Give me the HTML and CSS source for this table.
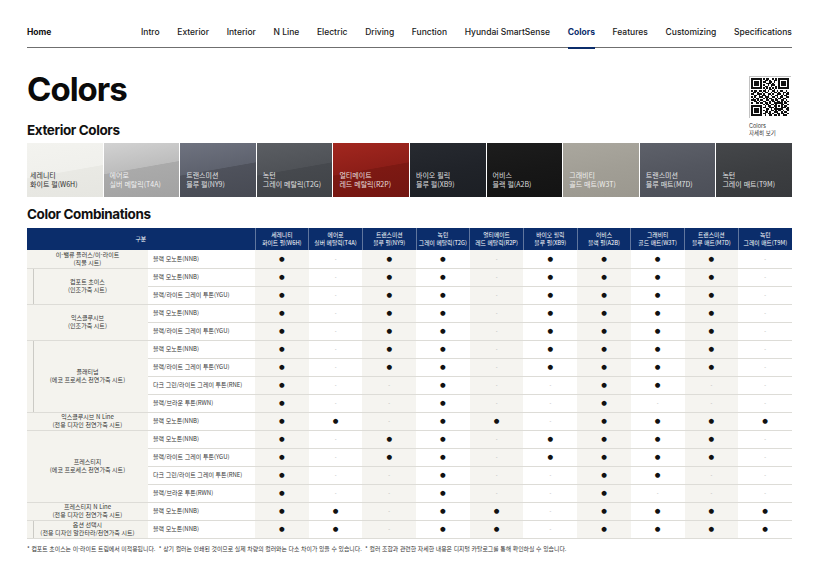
FILE: index.html
```html
<!DOCTYPE html>
<html lang="ko">
<head>
<meta charset="utf-8">
<title>Colors</title>
<link rel="stylesheet" href="styles.css">
</head>
<body>
<div class="page">
  <nav class="gnb">
    <span class="home">Home</span>
    <ul class="menu">
      <li>Intro</li><li>Exterior</li><li>Interior</li><li>N Line</li><li>Electric</li><li>Driving</li><li>Function</li><li>Hyundai SmartSense</li><li class="on">Colors</li><li>Features</li><li>Customizing</li><li>Specifications</li>
    </ul>
  </nav>

  <div class="head">
    <div class="titles">
      <h1 class="title">Colors</h1>
      <h2 class="sub">Exterior Colors</h2>
    </div>
    <div class="qr">
      <svg viewBox="-1.5 -1.5 28 28" shape-rendering="crispEdges">
        <rect x="-1.5" y="-1.5" width="28" height="28" fill="#fff" stroke="#9a9a9a" stroke-width="0.4"/>
        <path fill="#111" fill-rule="evenodd" d="M0 0h7v7H0zM1 1h5v5H1zM2 2h3v3H2zM18 0h7v7h-7zM19 1h5v5h-5zM20 2h3v3h-3zM0 18h7v7H0zM1 19h5v5H1zM2 20h3v3H2zM16 16h5v5h-5zM17 17h3v3h-3zM18 18h1v1h-1z"/>
        <path fill="none" stroke="#111" stroke-width="1" d="M8 .5h1M10 .5h2M14 .5h1M16 .5h1M9 1.5h2M12 1.5h1M15 1.5h2M8 2.5h2M12 2.5h2M15 2.5h1M10 3.5h3M14 3.5h1M8 4.5h1M11 4.5h1M13 4.5h3M9 5.5h2M13 5.5h1M16 5.5h1M8 6.5h1M10 6.5h1M12 6.5h1M14 6.5h1M16 6.5h1M9 7.5h1M12 7.5h2M15 7.5h1M0 8.5h1M2 8.5h2M5 8.5h2M8 8.5h2M11 8.5h1M14 8.5h2M17 8.5h1M19 8.5h2M23 8.5h1M1 9.5h2M4 9.5h1M7 9.5h1M9 9.5h2M13 9.5h1M15 9.5h2M18 9.5h1M21 9.5h2M24 9.5h1M0 10.5h2M4 10.5h3M8 10.5h1M11 10.5h2M14 10.5h1M17 10.5h3M21 10.5h1M23 10.5h2M2 11.5h2M5 11.5h1M7 11.5h3M11 11.5h1M13 11.5h1M16 11.5h2M20 11.5h1M22 11.5h2M0 12.5h1M2 12.5h1M5 12.5h3M9 12.5h3M14 12.5h2M17 12.5h1M19 12.5h2M23 12.5h2M1 13.5h1M3 13.5h2M8 13.5h1M10 13.5h1M12 13.5h2M16 13.5h1M18 13.5h2M21 13.5h2M0 14.5h3M4 14.5h1M6 14.5h2M10 14.5h2M13 14.5h2M16 14.5h2M20 14.5h2M23 14.5h1M2 15.5h2M5 15.5h1M8 15.5h2M12 15.5h1M14 15.5h2M17 15.5h2M20 15.5h1M22 15.5h1M24 15.5h1M0 16.5h1M3 16.5h2M6 16.5h2M9 16.5h2M12 16.5h1M15 16.5h1M22 16.5h2M8 17.5h1M10 17.5h2M13 17.5h2M21 17.5h1M24 17.5h1M9 18.5h1M11 18.5h2M15 18.5h1M22 18.5h2M8 19.5h2M12 19.5h3M21 19.5h2M24 19.5h1M10 20.5h2M13 20.5h1M15 20.5h1M23 20.5h2M8 21.5h1M10 21.5h1M13 21.5h2M16 21.5h1M18 21.5h2M21 21.5h1M24 21.5h1M9 22.5h2M12 22.5h1M15 22.5h3M20 22.5h1M22 22.5h2M8 23.5h2M11 23.5h2M14 23.5h1M17 23.5h2M20 23.5h2M24 23.5h1M9 24.5h1M12 24.5h2M15 24.5h2M18 24.5h1M21 24.5h3"/>
      </svg>
      <p>Colors<br>자세히 보기</p>
    </div>
  </div>

  <div class="swatches">
    <div class="sw sw1"><span>세레니티</span><span>화이트 펄(W6H)</span></div>
    <div class="sw sw2"><span>에어로</span><span>실버 메탈릭(T4A)</span></div>
    <div class="sw sw3"><span>트랜스미션</span><span>블루 펄(NY9)</span></div>
    <div class="sw sw4"><span>녹턴</span><span>그레이 메탈릭(T2G)</span></div>
    <div class="sw sw5"><span>얼티메이트</span><span>레드 메탈릭(R2P)</span></div>
    <div class="sw sw6"><span>바이오 필릭</span><span>블루 펄(XB9)</span></div>
    <div class="sw sw7"><span>어비스</span><span>블랙 펄(A2B)</span></div>
    <div class="sw sw8"><span>그래비티</span><span>골드 매트(W3T)</span></div>
    <div class="sw sw9"><span>트랜스미션</span><span>블루 매트(M7D)</span></div>
    <div class="sw sw10"><span>녹턴</span><span>그레이 매트(T9M)</span></div>
  </div>

  <h2 class="sub sub2">Color Combinations</h2>

  <table class="combo">
    <colgroup>
      <col class="g"><col class="t">
      <col class="alt"><col><col class="alt"><col><col class="alt"><col><col class="alt"><col><col class="alt"><col>
    </colgroup>
    <thead>
      <tr>
        <th colspan="2" class="gubun">구분</th>
        <th>세레니티<br>화이트 펄(W6H)</th>
        <th>에어로<br>실버 메탈릭(T4A)</th>
        <th>트랜스미션<br>블루 펄(NY9)</th>
        <th>녹턴<br>그레이 메탈릭(T2G)</th>
        <th>얼티메이트<br>레드 메탈릭(R2P)</th>
        <th>바이오 필릭<br>블루 펄(XB9)</th>
        <th>어비스<br>블랙 펄(A2B)</th>
        <th>그래비티<br>골드 매트(W3T)</th>
        <th>트랜스미션<br>블루 매트(M7D)</th>
        <th>녹턴<br>그레이 매트(T9M)</th>
      </tr>
    </thead>
    <tbody>
      <tr>
        <td class="grp">이-밸류 플러스/이-라이트<br>(직물 시트)</td><td class="trim">블랙 모노톤(NNB)</td>
        <td>●</td><td class="n">-</td><td>●</td><td>●</td><td class="n">-</td><td>●</td><td>●</td><td>●</td><td>●</td><td class="n">-</td>
      </tr>
      <tr>
        <td class="grp nest" rowspan="2">컴포트 초이스<br>(인조가죽 시트)</td><td class="trim">블랙 모노톤(NNB)</td>
        <td>●</td><td class="n">-</td><td>●</td><td>●</td><td class="n">-</td><td>●</td><td>●</td><td>●</td><td>●</td><td class="n">-</td>
      </tr>
      <tr>
        <td class="trim">블랙/라이트 그레이 투톤(YGU)</td>
        <td>●</td><td class="n">-</td><td>●</td><td>●</td><td class="n">-</td><td>●</td><td>●</td><td>●</td><td>●</td><td class="n">-</td>
      </tr>
      <tr>
        <td class="grp" rowspan="2">익스클루시브<br>(인조가죽 시트)</td><td class="trim">블랙 모노톤(NNB)</td>
        <td>●</td><td class="n">-</td><td>●</td><td>●</td><td class="n">-</td><td>●</td><td>●</td><td>●</td><td>●</td><td class="n">-</td>
      </tr>
      <tr>
        <td class="trim">블랙/라이트 그레이 투톤(YGU)</td>
        <td>●</td><td class="n">-</td><td>●</td><td>●</td><td class="n">-</td><td>●</td><td>●</td><td>●</td><td>●</td><td class="n">-</td>
      </tr>
      <tr>
        <td class="grp nest" rowspan="4">플래티넘<br>(에코 프로세스 천연가죽 시트)</td><td class="trim">블랙 모노톤(NNB)</td>
        <td>●</td><td class="n">-</td><td>●</td><td>●</td><td class="n">-</td><td>●</td><td>●</td><td>●</td><td>●</td><td class="n">-</td>
      </tr>
      <tr>
        <td class="trim">블랙/라이트 그레이 투톤(YGU)</td>
        <td>●</td><td class="n">-</td><td>●</td><td>●</td><td class="n">-</td><td>●</td><td>●</td><td>●</td><td>●</td><td class="n">-</td>
      </tr>
      <tr>
        <td class="trim">다크 그린/라이트 그레이 투톤(RNE)</td>
        <td>●</td><td class="n">-</td><td class="n">-</td><td>●</td><td class="n">-</td><td class="n">-</td><td>●</td><td>●</td><td class="n">-</td><td class="n">-</td>
      </tr>
      <tr>
        <td class="trim">블랙/브라운 투톤(RWN)</td>
        <td>●</td><td class="n">-</td><td class="n">-</td><td>●</td><td class="n">-</td><td class="n">-</td><td>●</td><td class="n">-</td><td class="n">-</td><td class="n">-</td>
      </tr>
      <tr>
        <td class="grp">익스클루시브 N Line<br>(전용 디자인 천연가죽 시트)</td><td class="trim">블랙 모노톤(NNB)</td>
        <td>●</td><td>●</td><td class="n">-</td><td>●</td><td>●</td><td class="n">-</td><td>●</td><td>●</td><td>●</td><td>●</td>
      </tr>
      <tr>
        <td class="grp" rowspan="4">프레스티지<br>(에코 프로세스 천연가죽 시트)</td><td class="trim">블랙 모노톤(NNB)</td>
        <td>●</td><td class="n">-</td><td>●</td><td>●</td><td class="n">-</td><td>●</td><td>●</td><td>●</td><td>●</td><td class="n">-</td>
      </tr>
      <tr>
        <td class="trim">블랙/라이트 그레이 투톤(YGU)</td>
        <td>●</td><td class="n">-</td><td>●</td><td>●</td><td class="n">-</td><td>●</td><td>●</td><td>●</td><td>●</td><td class="n">-</td>
      </tr>
      <tr>
        <td class="trim">다크 그린/라이트 그레이 투톤(RNE)</td>
        <td>●</td><td class="n">-</td><td class="n">-</td><td>●</td><td class="n">-</td><td class="n">-</td><td>●</td><td>●</td><td class="n">-</td><td class="n">-</td>
      </tr>
      <tr>
        <td class="trim">블랙/브라운 투톤(RWN)</td>
        <td>●</td><td class="n">-</td><td class="n">-</td><td>●</td><td class="n">-</td><td class="n">-</td><td>●</td><td class="n">-</td><td class="n">-</td><td class="n">-</td>
      </tr>
      <tr>
        <td class="grp">프레스티지 N Line<br>(전용 디자인 천연가죽 시트)</td><td class="trim">블랙 모노톤(NNB)</td>
        <td>●</td><td>●</td><td class="n">-</td><td>●</td><td>●</td><td class="n">-</td><td>●</td><td>●</td><td>●</td><td>●</td>
      </tr>
      <tr>
        <td class="grp nest">옵션 선택시<br>(전용 디자인 알칸타라/천연가죽 시트)</td><td class="trim">블랙 모노톤(NNB)</td>
        <td>●</td><td>●</td><td class="n">-</td><td>●</td><td>●</td><td class="n">-</td><td>●</td><td>●</td><td>●</td><td>●</td>
      </tr>
    </tbody>
  </table>

  <p class="note">* 컴포트 초이스는 이-라이트 트림에서 미적용됩니다.&nbsp; * 상기 컬러는 인쇄된 것이므로 실제 차량의 컬러와는 다소 차이가 있을 수 있습니다.&nbsp; * 컬러 조합과 관련한 자세한 내용은 디지털 카탈로그를 통해 확인하실 수 있습니다.</p>
</div>
</body>
</html>
```
FILE: styles.css
```css
* { box-sizing: border-box; margin: 0; padding: 0; }
body { background: #fff; font-family: Inter, "Noto Sans CJK KR", sans-serif; color: #111; }
.page { padding: 0 28px 0 27px; }

/* nav */
.gnb { display: flex; align-items: center; padding: 26px 0 9px; border-bottom: 1.5px solid #6f6f6f; font-size: 8.5px; line-height: 12px; }
.gnb .home { font-weight: 700; color: #111; }
.menu { display: flex; justify-content: space-between; list-style: none; margin-left: auto; width: 651px; }
.menu li { font-weight: 500; color: #1a1a1a; position: relative; }
.menu li.on { font-weight: 700; color: #0b2d6b; }
.menu li.on::after { content: ""; position: absolute; left: 0; right: 0; bottom: -10.5px; height: 2px; background: #0b2d6b; }

/* heading */
.head { display: flex; justify-content: space-between; align-items: flex-end; }
.title { font-size: 33px; line-height: 33px; font-weight: 700; letter-spacing: -1px; margin-top: 25px; color: #0a0a0a; }
.sub { font-size: 13.5px; line-height: 14px; font-weight: 700; letter-spacing: -0.4px; margin-top: 17px; color: #111; }
.qr { width: 42px; margin-right: 1px; }
.qr svg { display: block; width: 42px; height: 42px; }
.qr p { font-size: 5.5px; line-height: 7px; color: #333; margin-top: 5px; font-family: Inter, "Noto Sans CJK KR", sans-serif; }

/* swatches */
.swatches { display: grid; grid-template-columns: repeat(10, 1fr); gap: 1px; height: 54px; margin-top: 6px; }
.sw { display: flex; flex-direction: column; justify-content: flex-end; padding: 0 0 8px 6px; font-family: "Noto Sans CJK KR", sans-serif; font-size: 7px; line-height: 9px; color: rgba(255,255,255,0.86); white-space: nowrap; }
.sw1 { background: linear-gradient(170deg, #f3f3ef 0%, #f0f0ec 52%, #e9e9e4 53%, #e6e6e1 100%); color: #2e2e2e; padding-left: 3px; }
.sw2 { background: linear-gradient(170deg, #d2d2d2 0%, #bdbdbd 46%, #aaaaaa 47%, #a2a2a2 100%); }
.sw3 { background: linear-gradient(170deg, #6f7380 0%, #5e626e 48%, #4f525c 49%, #474a53 100%); }
.sw4 { background: linear-gradient(170deg, #5b5e63 0%, #4f5257 48%, #46494e 49%, #404347 100%); }
.sw5 { background: linear-gradient(170deg, #a2271f 0%, #8d1e18 48%, #7d1913 49%, #731611 100%); }
.sw6 { background: linear-gradient(170deg, #272a30 0%, #202329 50%, #1c1f24 100%); }
.sw7 { background: linear-gradient(170deg, #1d1d1d 0%, #171717 50%, #131313 100%); }
.sw8 { background: linear-gradient(170deg, #aaa79e 0%, #a19e95 50%, #9b988f 100%); }
.sw9 { background: linear-gradient(170deg, #5e616a 0%, #53565f 50%, #4c4f58 100%); }
.sw10 { background: linear-gradient(170deg, #45474a 0%, #3c3e41 50%, #37393c 100%); }

/* combinations */
.sub2 { margin-top: 10px; }
.combo { width: 765px; margin-top: 7px; border-collapse: collapse; table-layout: fixed; font-family: "Noto Sans CJK KR", sans-serif; font-size: 6px; color: #333; }
.combo col.g { width: 121px; }
.combo col.t { width: 107px; }
.combo col.alt { background: #f5f4f0; }
.combo th { background: #0b2d6b; color: #fff; font-weight: 400; height: 22px; font-size: 5.8px; line-height: 8px; white-space: nowrap; text-align: center; border-left: 1px solid rgba(255,255,255,0.35); overflow: visible; }
.combo th.gubun { border-left: none; }
.combo td { height: 18px; border-bottom: 1px solid #dddcd7; text-align: center; vertical-align: middle; line-height: 8px; font-family: "DejaVu Sans", sans-serif; font-size: 6.5px; color: #111; }
.combo td.n { color: #a8a8a8; font-size: 5px; }
.combo td.grp { background: #f4f3ee; font-family: "Noto Sans CJK KR", sans-serif; font-size: 6px; color: #333; white-space: nowrap; }
.combo td.nest { background: linear-gradient(#cbcac5, #cbcac5) 6px 0 / 1px 100% no-repeat, #f4f3ee; }
.combo td.trim { background: #fff; text-align: left; padding-left: 5px; font-family: "Noto Sans CJK KR", sans-serif; font-size: 6px; color: #333; white-space: nowrap; }

.note { margin-top: 6px; font-family: "Noto Sans CJK KR", sans-serif; font-size: 5.9px; line-height: 8px; color: #333; white-space: nowrap; }
```
